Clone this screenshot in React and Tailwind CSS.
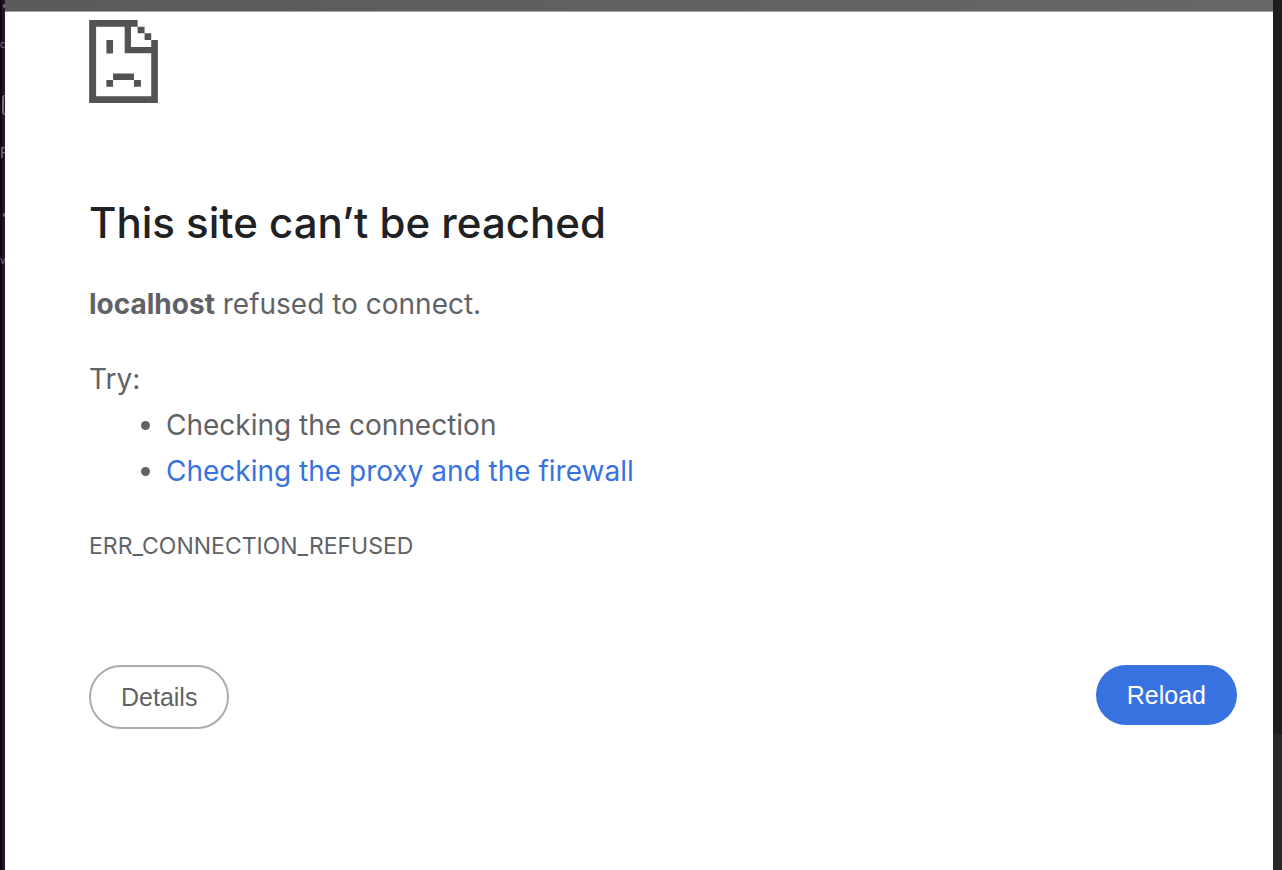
import React from 'react';

const SadPageIcon = () => (
  <svg
    className="block w-[69px] h-[83px]"
    viewBox="0 0 207 250"
    fill="#535353"
    shapeRendering="geometricPrecision"
    aria-hidden="true"
  >
    {/* page outline with the folded corner */}
    <path d="M0 0h146v20h-20v61h61v-21h20v190H0zM21 20v210h166V100h-80V20z" fillRule="evenodd" />
    <path d="M146 20h21v20h-21zM167 40h20v20h-20z" />
    {/* eye and mouth */}
    <path d="M52 60h20v41h-20zM72 161h63v20h-63zM52 181h20v20h-20zM135 181h21v20h-21z" />
  </svg>
);

const LeftStrip = () => (
  <aside className="flex w-[5px] shrink-0 flex-col items-start overflow-hidden bg-linear-to-r from-[#160318] from-50% to-[#251528] to-50% text-[#77707a]">
    <span className="mt-1 ml-[3px] h-1 w-1 shrink-0 rounded-l-full bg-[#77707a]"></span>
    <span className="mt-7 text-[10px] leading-4">c</span>
    <span className="mt-[43px] ml-[2px] h-5 w-[3px] shrink-0 rounded-l-full border-y border-l-2 border-[#77707a]"></span>
    <span className="mt-[26px] text-sm leading-6">F</span>
    <span className="mt-12 ml-[3px] h-1 w-1 shrink-0 rounded-l-full bg-[#77707a]"></span>
    <span className="mt-[33px] text-[10px] leading-5">v</span>
  </aside>
);

const RightStrip = () => (
  <aside className="flex w-[9px] shrink-0 flex-col bg-[#1d1e21]">
    <div className="flex-1"></div>
    <div className="h-[136px] bg-[#28282b]"></div>
  </aside>
);

const ErrorPage = () => (
  <main className="flex-1 pt-2 pr-9 pl-[84px] font-['Inter',sans-serif] text-[28px] leading-[46px] text-[#5f6368]">
    <SadPageIcon />
    <h1 className="mt-[92px] text-[42px] leading-[56px] font-medium text-[#202124]">
      This site can’t be reached
    </h1>
    <p className="mt-[30px]">
      <strong className="font-bold">localhost</strong> refused to connect.
    </p>
    <p className="mt-[29px]">Try:</p>
    <ul className="list-disc pl-[77px]">
      <li>Checking the connection</li>
      <li>
        <a href="#buttons" className="text-[#3871e0]">
          Checking the proxy and the firewall
        </a>
      </li>
    </ul>
    <p className="mt-[29px] text-[23px]">ERR_CONNECTION_REFUSED</p>
    <div
      id="buttons"
      className="mt-24 flex items-start justify-between font-['Liberation_Sans',sans-serif] text-[25px] leading-7"
    >
      <button
        type="button"
        className="rounded-full border-2 border-[#a9adb2] px-[30px] py-4"
      >
        Details
      </button>
      <button type="button" className="rounded-full bg-[#3871e0] px-[31px] py-4 text-white">
        Reload
      </button>
    </div>
  </main>
);

export default function App() {
  return (
    <div className="flex min-h-screen bg-white font-['Inter',sans-serif]">
      <LeftStrip />
      <div className="flex flex-1 flex-col">
        <header className="h-3 border-b border-[#a3a3a3] bg-linear-to-r from-[#5a5a5a] to-[#676767]"></header>
        <ErrorPage />
      </div>
      <RightStrip />
    </div>
  );
}
